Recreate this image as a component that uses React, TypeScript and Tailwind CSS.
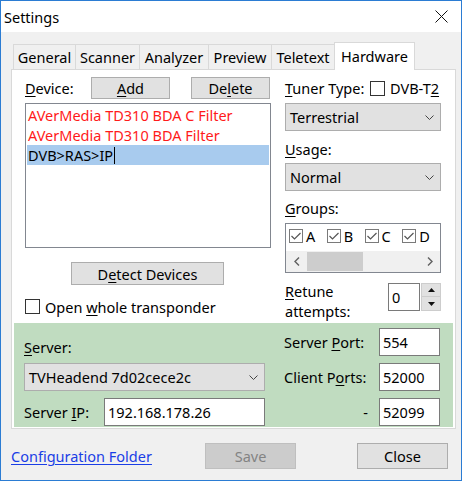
import React from 'react';

const Btn = ({ children, className = '' }: { children: React.ReactNode; className?: string }) => (
    <div className={`flex items-center justify-center bg-[#e1e1e1] border border-[#adadad] ${className}`}>{children}</div>
);

const U = ({ children }: { children: React.ReactNode }) => (
    <span className="underline underline-offset-[2px] decoration-1">{children}</span>
);

const Chevron = () => (
    <svg width="9" height="5" viewBox="0 0 9 5">
        <polyline points="0.5,0.5 4.5,4.5 8.5,0.5" fill="none" stroke="#444" strokeWidth="1" />
    </svg>
);

const CheckBox = ({ checked }: { checked?: boolean }) =>
    checked ? (
        <span className="w-[14px] h-[14px] shrink-0 flex items-center justify-center border border-[#7a7a7a] bg-white">
            <svg width="12" height="12" viewBox="0 0 12 12">
                <polyline points="1.5,6 4.5,9 10.5,3" fill="none" stroke="#555" strokeWidth="1.2" />
            </svg>
        </span>
    ) : (
        <span className="w-[15px] h-[15px] shrink-0 border border-[#333] bg-white" />
    );

const Combo = ({ text, className = '' }: { text: string; className?: string }) => (
    <div className={`h-[28px] flex items-center justify-between pl-[4px] pr-[6px] bg-[#e1e1e1] border border-[#adadad] ${className}`}>
        <span>{text}</span>
        <Chevron />
    </div>
);

const Input = ({ text, className = '' }: { text: string; className?: string }) => (
    <div className={`h-[28px] flex items-center pl-[3px] bg-white border border-[#7a7a7a] ${className}`}>{text}</div>
);

const tabs = [
    { name: 'General', w: 'w-[62px]' },
    { name: 'Scanner', w: 'w-[64px]' },
    { name: 'Analyzer', w: 'w-[69px]' },
    { name: 'Preview', w: 'w-[63px]' },
    { name: 'Teletext', w: 'w-[63px]' },
];

export default function App() {
    return (
        <div className="w-[462px] h-[481px] border border-[#2b7cd3] bg-[#f0f0f0] flex flex-col overflow-hidden text-black text-[14.5px] leading-[20px] font-['Noto_Sans',sans-serif]">
            {/* title bar */}
            <div className="h-[31px] shrink-0 bg-white flex items-center justify-between pl-[3px] pr-[13px]">
                <span>Settings</span>
                <svg width="13" height="13" viewBox="0 0 13 13">
                    <path d="M0.5 0.5 L12.5 12.5 M12.5 0.5 L0.5 12.5" stroke="#111" strokeWidth="1" />
                </svg>
            </div>

            {/* tabs */}
            <div className="mt-[10px] ml-[12px] flex items-end h-[28px] shrink-0">
                {tabs.map(t => (
                    <div key={t.name} className={`${t.w} h-[25px] mb-px flex items-center justify-center border-t border-l border-[#d9d9d9] bg-[#f0f0f0]`}>
                        {t.name}
                    </div>
                ))}
                <div className="relative z-10 w-[81px] h-[28px] flex justify-center pt-[3px] bg-white border-t border-l border-r border-[#d9d9d9]">
                    Hardware
                </div>
            </div>

            {/* tab page */}
            <div className="-mt-px ml-[10px] w-[445px] h-[360px] shrink-0 bg-white border border-[#d9d9d9] flex flex-col">
                <div className="h-[253px] flex gap-[14px] pl-[13px] pt-[7px]">
                    {/* left column */}
                    <div className="w-[246px] flex flex-col">
                        <div className="h-[22px] flex items-center">
                            <span className="w-[66px]"><U>D</U>evice:</span>
                            <Btn className="w-[79px] h-[22px]"><span><U>A</U>dd</span></Btn>
                            <Btn className="w-[79px] h-[22px] ml-[21px]"><span>De<U>l</U>ete</span></Btn>
                        </div>
                        <div className="mt-[4px] h-[145px] border border-[#828790] bg-white p-px">
                            <div className="h-[20px] pl-px text-[#ff1a1a]">AVerMedia TD310 BDA C Filter</div>
                            <div className="h-[20px] pl-px text-[#ff1a1a]">AVerMedia TD310 BDA Filter</div>
                            <div className="h-[20px] pl-px bg-[#a8cbee] flex items-center">
                                <span>DVB&gt;RAS&gt;IP</span>
                                <span className="w-px h-[17px] bg-black ml-px" />
                            </div>
                        </div>
                        <Btn className="mt-[14px] ml-[46px] w-[153px] h-[23px]"><span>D<U>e</U>tect Devices</span></Btn>
                        <div className="mt-[13px] h-[17px] flex items-center gap-[5px]">
                            <CheckBox />
                            <span>Open <U>w</U>hole transponder</span>
                        </div>
                    </div>

                    {/* right column */}
                    <div className="w-[156px] flex flex-col">
                        <div className="h-[22px] flex items-center">
                            <span className="w-[85px]"><U>T</U>uner Type:</span>
                            <CheckBox />
                            <span className="ml-[5px]">DVB-T<U>2</U></span>
                        </div>
                        <Combo text="Terrestrial" className="mt-[4px]" />
                        <div className="mt-[8px] h-[20px]"><U>U</U>sage:</div>
                        <Combo text="Normal" className="mt-[4px]" />
                        <div className="mt-[7px] h-[20px]"><U>G</U>roups:</div>
                        <div className="mt-[5px] h-[50px] border border-[#828790] bg-white flex flex-col justify-between">
                            <div className="flex pl-[3px] pt-[5px]">
                                {['A', 'B', 'C', 'D'].map(l => (
                                    <div key={l} className="w-[38px] flex items-center gap-[3px] h-[14px]">
                                        <CheckBox checked />
                                        <span>{l}</span>
                                    </div>
                                ))}
                            </div>
                            <div className="h-[21px] bg-[#f0f0f0] flex items-center">
                                <div className="w-[21px] flex justify-center">
                                    <svg width="6" height="9" viewBox="0 0 6 9">
                                        <polyline points="5,0.5 1,4.5 5,8.5" fill="none" stroke="#606060" strokeWidth="1.4" />
                                    </svg>
                                </div>
                                <div className="w-[56px] h-[19px] bg-[#cdcdcd]" />
                                <div className="flex-1 flex justify-end pr-[7px]">
                                    <svg width="6" height="9" viewBox="0 0 6 9">
                                        <polyline points="1,0.5 5,4.5 1,8.5" fill="none" stroke="#606060" strokeWidth="1.4" />
                                    </svg>
                                </div>
                            </div>
                        </div>
                        <div className="mt-[10px] flex justify-between">
                            <div className="leading-[20px] -mt-[2px]">
                                <div><U>R</U>etune</div>
                                <div>attempts:</div>
                            </div>
                            <div className="flex">
                                <Input text="0" className="w-[32px]" />
                                <div className="ml-[1px] w-[20px] flex flex-col">
                                    <div className="h-[14px] bg-[#e1e1e1] border border-[#cdcdcd] flex items-center justify-center">
                                        <svg width="7" height="4" viewBox="0 0 7 4"><polygon points="0,4 3.5,0 7,4" fill="#111" /></svg>
                                    </div>
                                    <div className="h-[14px] bg-[#e1e1e1] border border-[#cdcdcd] border-t-0 flex items-center justify-center">
                                        <svg width="7" height="4" viewBox="0 0 7 4"><polygon points="0,0 3.5,4 7,0" fill="#111" /></svg>
                                    </div>
                                </div>
                            </div>
                        </div>
                    </div>
                </div>

                {/* network section */}
                <div className="mx-[2px] h-[104px] bg-[#c0dcc0] pl-[10px] pt-[5px] flex flex-col gap-[7px]">
                    <div className="h-[28px] flex">
                        <div className="w-[241px] pt-[9px]"><U>S</U>erver:</div>
                        <div className="ml-[19px] w-[95px] flex items-center"><span>Server <U>P</U>ort:</span></div>
                        <Input text="554" className="w-[61px]" />
                    </div>
                    <div className="h-[28px] flex">
                        <Combo text="TVHeadend 7d02cece2c" className="w-[241px]" />
                        <div className="ml-[19px] w-[95px] flex items-center"><span>Client P<U>o</U>rts:</span></div>
                        <Input text="52000" className="w-[61px]" />
                    </div>
                    <div className="h-[28px] flex">
                        <div className="w-[80px] flex items-center"><span>Server <U>I</U>P:</span></div>
                        <Input text="192.168.178.26" className="w-[161px]" />
                        <div className="ml-[19px] w-[95px] flex items-center justify-end pr-[11px]">-</div>
                        <Input text="52099" className="w-[61px]" />
                    </div>
                </div>
            </div>

            {/* bottom bar */}
            <div className="flex items-center h-[26px] mt-[14px]">
                <div className="w-[204px] pl-[10px]">
                    <span className="text-[#1a3ee6] underline underline-offset-[2px] decoration-1">Configuration Folder</span>
                </div>
                <div className="w-[91px] h-[26px] flex items-center justify-center bg-[#cccccc] border border-[#bfbfbf] text-[#838383]">Save</div>
                <Btn className="ml-[61px] w-[91px] h-[26px]">Close</Btn>
            </div>
        </div>
    );
}
